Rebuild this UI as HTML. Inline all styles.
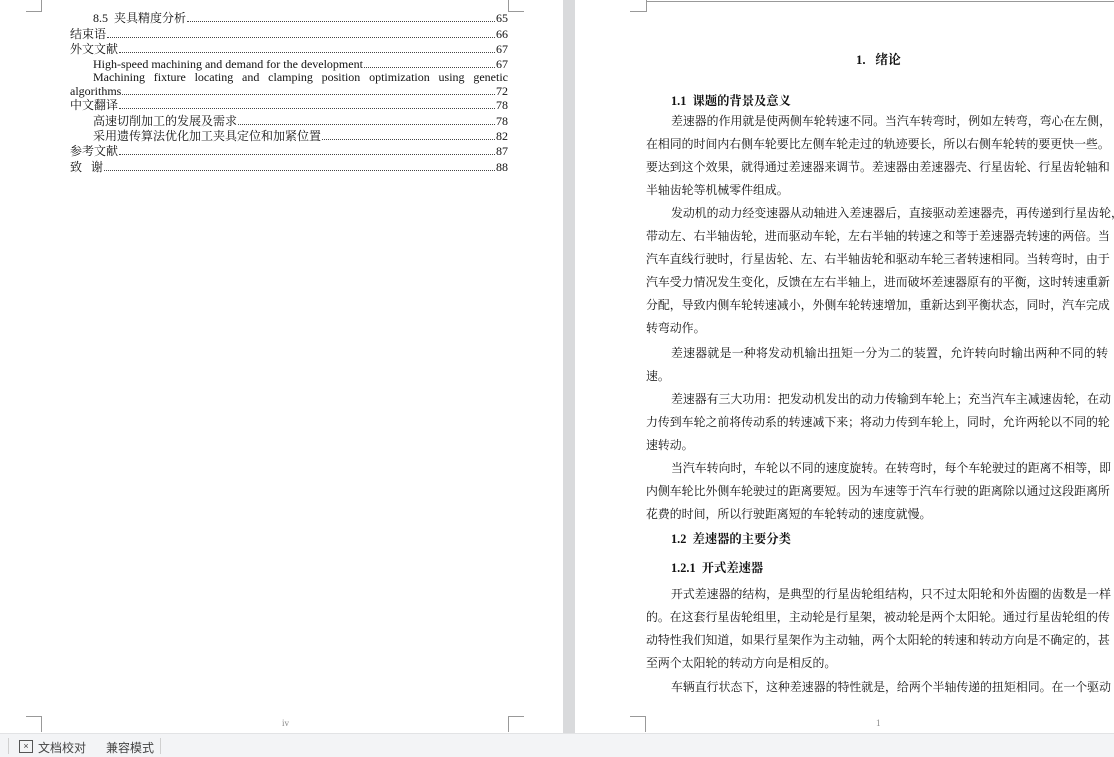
<!DOCTYPE html>
<html><head><meta charset="utf-8"><style>
*{margin:0;padding:0;box-sizing:border-box}
body{width:1114px;height:757px;overflow:hidden;background:#fff;position:relative;font-family:"Liberation Serif","Noto Serif CJK SC",serif;color:#111}
.gray{position:absolute;left:563px;top:0;width:12px;height:733px;background:#d9dadc}
.l{position:absolute;white-space:nowrap}
.toc{position:absolute;font-size:12px;line-height:14px;display:flex;left:70px;width:438px}
.toc .t{white-space:nowrap}
.toc .d{flex:1;border-bottom:1px dotted #444;margin:0 1px 3px}
.b{position:absolute;left:646px;width:462px;font-size:11.9px;line-height:16px;text-align:justify;text-align-last:justify;white-space:nowrap}
.bl{text-align-last:left}
.in{padding-left:25px}
.h{position:absolute;font-weight:bold;font-size:12.3px;white-space:nowrap}
.mark{position:absolute;border-color:#999;border-style:solid;width:16px;height:16px}
.sb{position:absolute;left:0;top:733px;width:1114px;height:24px;background:#f3f4f6;border-top:1px solid #e2e3e5;font-family:"Liberation Sans","Noto Sans CJK SC",sans-serif;font-size:12px;color:#444}
</style></head><body>
<div class="gray"></div>
<div class="mark" style="left:26px;top:-4px;border-width:0 1px 1px 0"></div>
<div class="mark" style="left:508px;top:-4px;border-width:0 0 1px 1px"></div>
<div class="mark" style="left:26px;top:716px;border-width:1px 1px 0 0"></div>
<div class="mark" style="left:508px;top:716px;border-width:1px 0 0 1px"></div>
<div class="toc" style="top:11px;left:93px;width:415px"><span class="t">8.5&nbsp; 夹具精度分析</span><span class="d"></span><span>65</span></div>
<div class="toc" style="top:27px"><span class="t">结束语</span><span class="d"></span><span>66</span></div>
<div class="toc" style="top:42px"><span class="t">外文文献</span><span class="d"></span><span>67</span></div>
<div class="toc" style="top:57px;left:93px;width:415px"><span class="t">High-speed machining and demand for the development</span><span class="d"></span><span>67</span></div>
<div class="l" style="top:70px;left:93px;width:415px;font-size:12px;text-align:justify;text-align-last:justify">Machining fixture locating and clamping position optimization using genetic</div>
<div class="toc" style="top:84px"><span class="t">algorithms</span><span class="d"></span><span>72</span></div>
<div class="toc" style="top:98px"><span class="t">中文翻译</span><span class="d"></span><span>78</span></div>
<div class="toc" style="top:114px;left:93px;width:415px"><span class="t">高速切削加工的发展及需求</span><span class="d"></span><span>78</span></div>
<div class="toc" style="top:129px;left:93px;width:415px"><span class="t">采用遗传算法优化加工夹具定位和加紧位置</span><span class="d"></span><span>82</span></div>
<div class="toc" style="top:144px"><span class="t">参考文献</span><span class="d"></span><span>87</span></div>
<div class="toc" style="top:160px"><span class="t">致&nbsp;&nbsp;&nbsp;谢</span><span class="d"></span><span>88</span></div>
<div class="l" style="left:282px;top:718px;font-size:9px;color:#888">iv</div>
<div style="position:absolute;left:646px;top:1px;width:468px;height:1px;background:#999"></div>
<div style="position:absolute;left:646px;top:0;width:1px;height:12px;background:#999"></div>
<div class="mark" style="left:630px;top:-4px;border-width:0 0 1px 0"></div>
<div class="mark" style="left:630px;top:716px;border-width:1px 1px 0 0"></div>
<div class="h" style="left:856px;top:49px;font-size:12.8px">1.&nbsp;&nbsp; 绪论</div>
<div class="h" style="left:671px;top:91px">1.1&nbsp; 课题的背景及意义</div>
<div class="b in" style="top:113px">差速器的作用就是使两侧车轮转速不同。当汽车转弯时，例如左转弯，弯心在左侧，</div>
<div class="b" style="top:136px">在相同的时间内右侧车轮要比左侧车轮走过的轨迹要长，所以右侧车轮转的要更快一些。</div>
<div class="b" style="top:159px">要达到这个效果，就得通过差速器来调节。差速器由差速器壳、行星齿轮、行星齿轮轴和</div>
<div class="b bl" style="top:182px">半轴齿轮等机械零件组成。</div>
<div class="b in" style="top:205px">发动机的动力经变速器从动轴进入差速器后，直接驱动差速器壳，再传递到行星齿轮，</div>
<div class="b" style="top:228px">带动左、右半轴齿轮，进而驱动车轮，左右半轴的转速之和等于差速器壳转速的两倍。当</div>
<div class="b" style="top:251px">汽车直线行驶时，行星齿轮、左、右半轴齿轮和驱动车轮三者转速相同。当转弯时，由于</div>
<div class="b" style="top:274px">汽车受力情况发生变化，反馈在左右半轴上，进而破坏差速器原有的平衡，这时转速重新</div>
<div class="b" style="top:297px">分配，导致内侧车轮转速减小，外侧车轮转速增加，重新达到平衡状态，同时，汽车完成</div>
<div class="b bl" style="top:320px">转弯动作。</div>
<div class="b in" style="top:345px">差速器就是一种将发动机输出扭矩一分为二的装置，允许转向时输出两种不同的转</div>
<div class="b bl" style="top:368px">速。</div>
<div class="b in" style="top:391px">差速器有三大功用：把发动机发出的动力传输到车轮上；充当汽车主减速齿轮，在动</div>
<div class="b" style="top:414px">力传到车轮之前将传动系的转速减下来；将动力传到车轮上，同时，允许两轮以不同的轮</div>
<div class="b bl" style="top:437px">速转动。</div>
<div class="b in" style="top:460px">当汽车转向时，车轮以不同的速度旋转。在转弯时，每个车轮驶过的距离不相等，即</div>
<div class="b" style="top:483px">内侧车轮比外侧车轮驶过的距离要短。因为车速等于汽车行驶的距离除以通过这段距离所</div>
<div class="b bl" style="top:506px">花费的时间，所以行驶距离短的车轮转动的速度就慢。</div>
<div class="h" style="left:671px;top:529px">1.2&nbsp; 差速器的主要分类</div>
<div class="h" style="left:671px;top:558px">1.2.1&nbsp; 开式差速器</div>
<div class="b in" style="top:586px">开式差速器的结构，是典型的行星齿轮组结构，只不过太阳轮和外齿圈的齿数是一样</div>
<div class="b" style="top:609px">的。在这套行星齿轮组里，主动轮是行星架，被动轮是两个太阳轮。通过行星齿轮组的传</div>
<div class="b" style="top:632px">动特性我们知道，如果行星架作为主动轴，两个太阳轮的转速和转动方向是不确定的，甚</div>
<div class="b bl" style="top:655px">至两个太阳轮的转动方向是相反的。</div>
<div class="b in" style="top:679px">车辆直行状态下，这种差速器的特性就是，给两个半轴传递的扭矩相同。在一个驱动</div>
<div class="l" style="left:876px;top:718px;font-size:9px;color:#888">1</div>
<div class="sb">
<div style="position:absolute;left:19px;top:6px;width:14px;height:13px;border:1px solid #555;font-size:9px;line-height:11px;text-align:center">×</div>
<div class="l" style="left:38px;top:5px">文档校对</div>
<div class="l" style="left:106px;top:5px">兼容模式</div>
<div style="position:absolute;left:160px;top:4px;width:1px;height:16px;background:#d0d0d0"></div>
<div style="position:absolute;left:8px;top:4px;width:1px;height:16px;background:#d0d0d0"></div>
</div>
</body></html>
